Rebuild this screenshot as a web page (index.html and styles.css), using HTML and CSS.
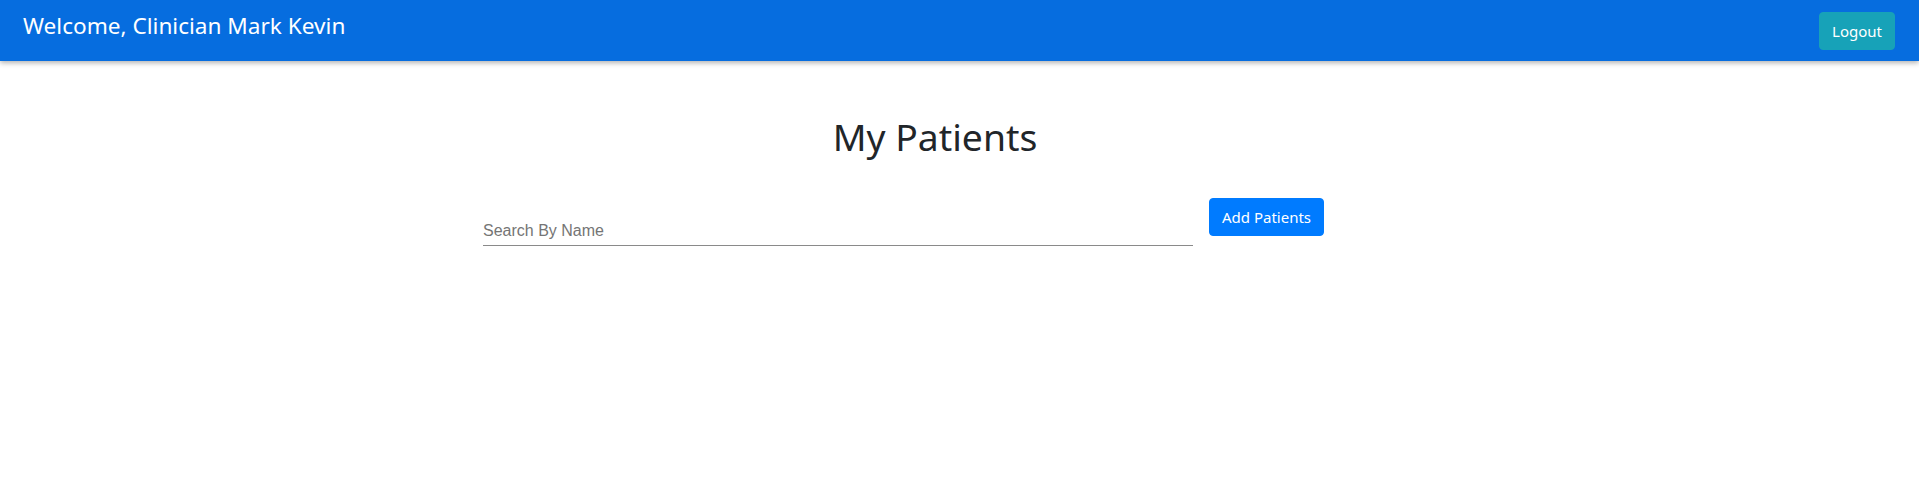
FILE: index.html
```html
<!DOCTYPE html>
<html lang="en">
<head>
<meta charset="utf-8">
<title>My Patients</title>
<link rel="stylesheet" href="styles.css">
</head>
<body>
<header class="topbar">
  <div class="brand">Welcome, Clinician Mark Kevin</div>
  <button class="btn btn-info">Logout</button>
</header>
<main class="content">
  <h1 class="title">My Patients</h1>
  <div class="search-row">
    <input class="search" type="text" placeholder="Search By Name">
    <button class="btn btn-primary">Add Patients</button>
  </div>
</main>
</body>
</html>
```
FILE: styles.css
```css
* { box-sizing: border-box; }
body {
  margin: 0;
  font-family: "Noto Sans", "Open Sans", sans-serif;
  color: #212529;
  background: #fff;
}
.topbar {
  height: 61px;
  background: #066ddf;
  display: flex;
  align-items: center;
  justify-content: space-between;
  padding: 0 24px 0 23px;
  box-shadow: 0 2px 5px rgba(0,0,0,0.3);
}
.brand {
  align-self: flex-start;
  padding-top: 15px;
  color: #fff;
  font-size: 22.6px;
  line-height: 1;
}
.btn {
  font-family: "Noto Sans", "Open Sans", sans-serif;
  font-size: 15px;
  color: #fff;
  border: 1px solid transparent;
  border-radius: 4px;
  height: 38px;
  padding: 0;
  cursor: pointer;
}
.btn-info { background: #17a2b8; border-color: #17a2b8; width: 76px; }
.btn-primary { background: #007bff; border-color: #007bff; width: 115px; }
.content {
  margin-left: 483px;
  width: 904px;
}
.title {
  margin: 0;
  padding-top: 54px;
  text-align: center;
  font-weight: 400;
  font-size: 37.3px;
  line-height: 44px;
}
.search-row {
  display: flex;
  align-items: flex-start;
  gap: 16px;
  margin-top: 39px;
}
.search {
  width: 710px;
  margin-top: 19px;
  height: 29px;
  border: none;
  border-bottom: 1px solid #8a8a8a;
  padding: 0;
  font-family: "Liberation Sans", Arial, sans-serif;
  font-size: 16px;
  outline: none;
}
.search::placeholder { color: #757575; }
```
